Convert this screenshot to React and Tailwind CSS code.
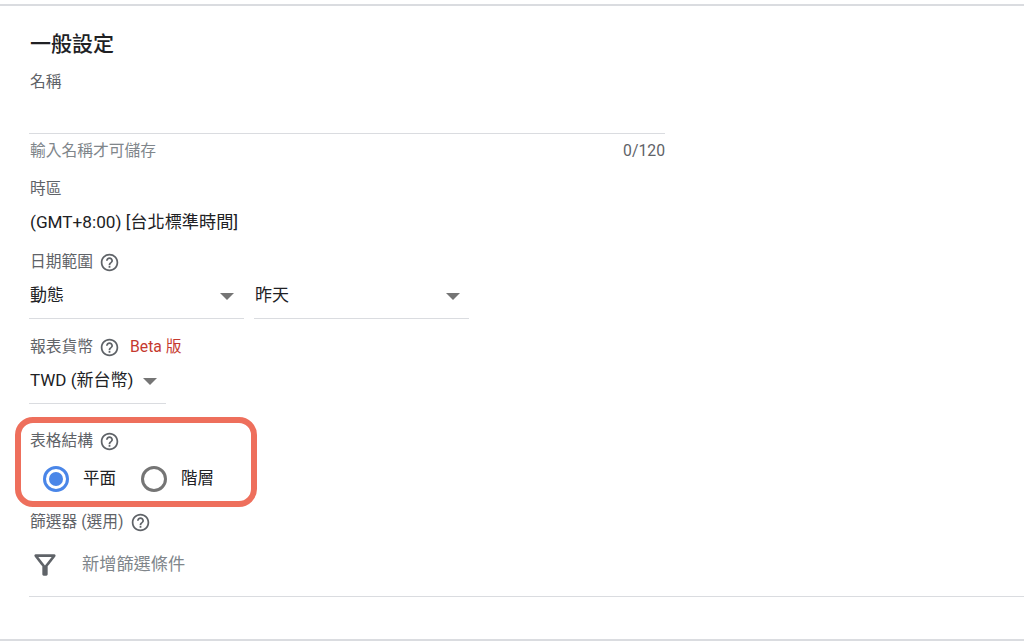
import React from "react";

const font = { fontFamily: '"Roboto", "Noto Sans CJK TC", sans-serif' };

const HelpIcon = ({ className = "" }) => (
    <svg viewBox="0 0 24 24" className={`w-[21px] h-[21px] fill-[#5f6368] ${className}`}>
        <path d="M11 18h2v-2h-2v2zm1-16C6.48 2 2 6.48 2 12s4.48 10 10 10 10-4.48 10-10S17.52 2 12 2zm0 18c-4.41 0-8-3.59-8-8s3.59-8 8-8 8 3.59 8 8-3.59 8-8 8zm0-14c-2.21 0-4 1.79-4 4h2c0-1.1.9-2 2-2s2 .9 2 2c0 2-3 1.75-3 5h2c0-2.25 3-2.5 3-5 0-2.21-1.79-4-4-4z" />
    </svg>
);

const Caret = () => (
    <svg viewBox="0 0 14 7" className="w-[14px] h-[7px] fill-[#757575]">
        <path d="M0 0h14L7 7z" />
    </svg>
);

const Select = ({ label, caretGap }) => (
    <div className="flex items-center w-[215px] h-[45px] pl-px border-b border-[#dadce0] text-[17px] text-[#202124]">
        <span className={caretGap}>{label}</span>
        <Caret />
    </div>
);

const Radio = ({ checked, label }) => (
    <div className="flex items-center">
        <span className={`flex items-center justify-center w-[26px] h-[26px] rounded-full border-[3px] ${checked ? "border-[#4a86e8]" : "border-[#757575]"}`}>
            {checked && <span className="w-[14px] h-[14px] rounded-full bg-[#4a86e8]" />}
        </span>
        <span className="ml-[14px] text-[16.5px] text-[#202124]">{label}</span>
    </div>
);

const App = () => {
    return (
        <div style={font} className="w-[1024px] h-[641px] overflow-hidden bg-white pt-1 text-[15.75px] text-[#5f6368]">
            <div className="h-[637px] border-t-2 border-b-2 border-[#dadce0] pl-[29px]">
                <h2 className="flex items-center h-[64px] pl-px pt-[14px] text-[21px] font-medium text-[#202124]">一般設定</h2>

                {/* name */}
                <div className="flex items-center h-[24px] pl-px">名稱</div>
                <div className="w-[636px] h-[40px] border-b border-[#dadce0]" />
                <div className="flex items-center justify-between w-[636px] h-[32px] pl-px pt-[2px] text-[#80868b]">
                    <span>輸入名稱才可儲存</span>
                    <span className="text-[#5f6368]">0/120</span>
                </div>

                {/* time zone */}
                <div className="flex items-center h-[24px] mt-[11px] pl-px">時區</div>
                <div className="flex items-center h-[34px] mt-[5px] pl-px text-[17.2px] text-[#202124]">(GMT+8:00) [台北標準時間]</div>

                {/* date range */}
                <div className="flex items-center h-[24px] mt-[10px] pl-px">
                    日期範圍
                    <HelpIcon className="ml-[6px]" />
                </div>
                <div className="flex gap-[10px]">
                    <Select label="動態" caretGap="w-[190px]" />
                    <Select label="昨天" caretGap="w-[191px]" />
                </div>

                {/* currency */}
                <div className="flex items-center h-[24px] mt-[16px] pl-px">
                    報表貨幣
                    <HelpIcon className="ml-[6px]" />
                    <span className="ml-[10px] text-[#c5392f]">Beta 版</span>
                </div>
                <div className="flex items-center gap-[10px] w-[137px] h-[45px] pl-px border-b border-[#dadce0] text-[17px] text-[#202124]">
                    <span>TWD (新台幣)</span>
                    <Caret />
                </div>

                {/* table structure, the outline is the highlight from the picture */}
                <div className="w-[242px] h-[90px] -ml-[14px] mt-[13px] pl-[9px] pt-[6px] border-[6px] border-[#ee6f5c] rounded-[18px]">
                    <div className="flex items-center h-[24px]">
                        表格結構
                        <HelpIcon className="ml-[6px]" />
                    </div>
                    <div className="flex items-center gap-[25px] mt-[13px] pl-[13px]">
                        <Radio checked label="平面" />
                        <Radio label="階層" />
                    </div>
                </div>

                {/* filter */}
                <div className="flex items-center h-[24px] mt-[3px] pl-px">
                    篩選器 (選用)
                    <HelpIcon className="ml-[6px]" />
                </div>
                <div className="flex items-center h-[52px] mt-[6px] pb-[2px] text-[#80868b]">
                    <svg viewBox="0 0 24 24" className="w-[32px] h-[32px] fill-[#5f6368]">
                        <path d="M7 6h10l-5.01 6.3L7 6zm-2.75-.39C6.27 8.2 10 13 10 13v6c0 .55.45 1 1 1h2c.55 0 1-.45 1-1v-6s3.72-4.8 5.74-7.39c.51-.66.04-1.61-.79-1.61H5.04c-.83 0-1.3.95-.79 1.61z" />
                    </svg>
                    <span className="ml-[21px] text-[17.2px]">新增篩選條件</span>
                </div>
                <div className="h-[5px] border-b border-[#dadce0]" />
            </div>
        </div>
    );
};

export default App;
